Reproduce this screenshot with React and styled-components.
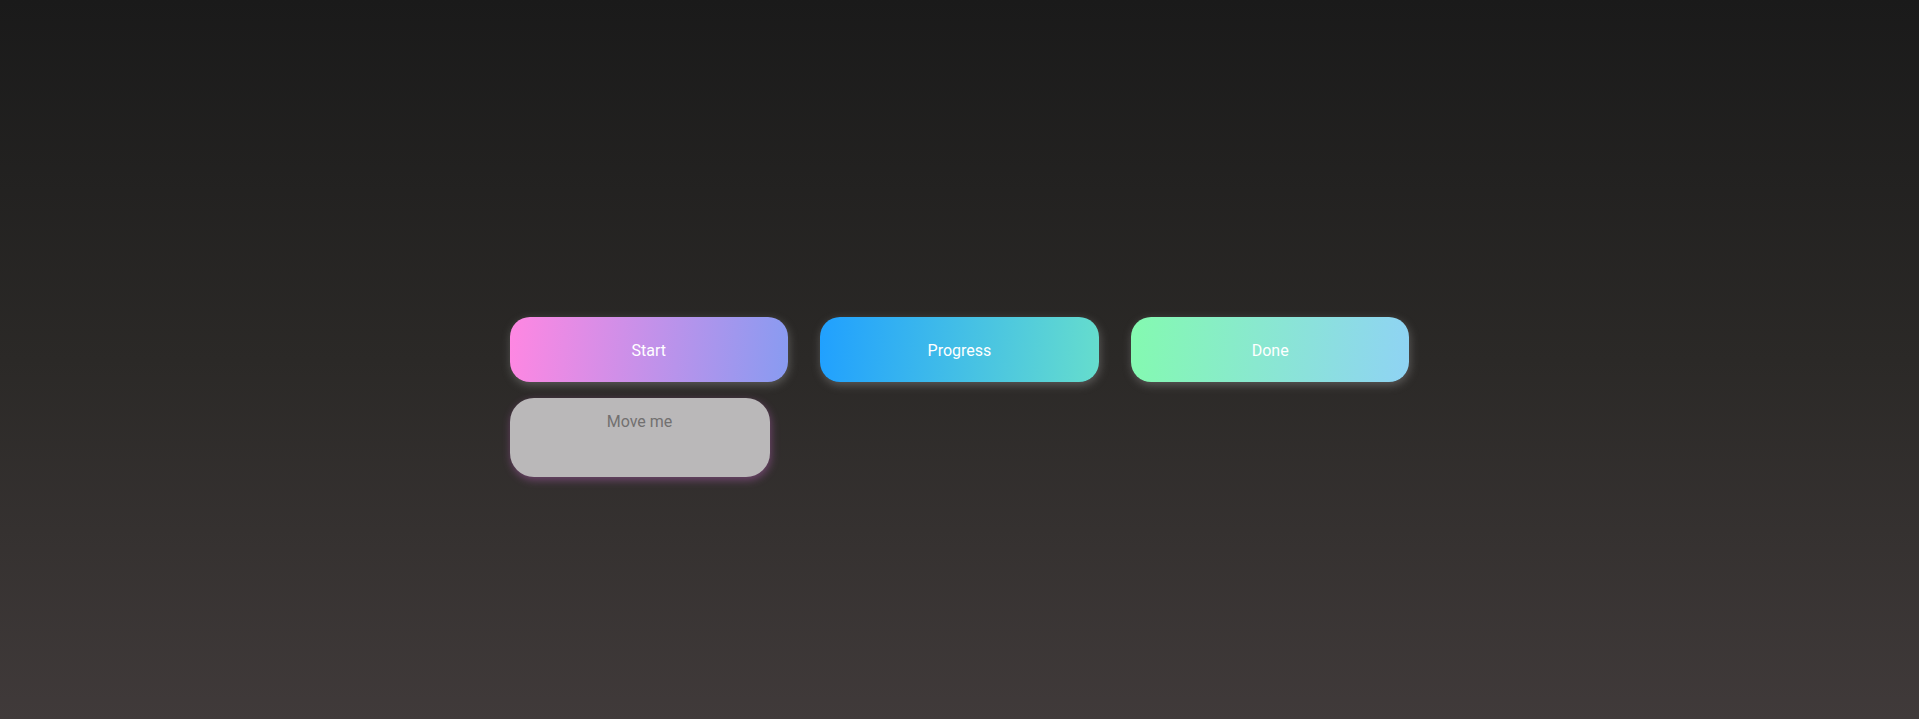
import React from "react";
import styled, { createGlobalStyle } from "styled-components";

const GlobalStyle = createGlobalStyle`
  html, body {
    margin: 0;
    padding: 0;
  }
  body {
    font-family: Roboto, "Noto Sans", sans-serif;
    background: #1a1a1a;
  }
`;

const Page = styled.div`
  min-height: 100vh;
  box-sizing: border-box;
  padding-top: 317px;
  background: linear-gradient(180deg, #1a1a1a 0%, #2b2927 50%, #403a3a 100%);
  display: flex;
  justify-content: center;
`;

const Board = styled.div`
  width: 900px;
  display: flex;
  flex-direction: column;
  gap: 16px;
`;

const Columns = styled.div`
  display: grid;
  grid-template-columns: repeat(3, 1fr);
  gap: 32px;
`;

const Column = styled.div`
  height: 65px;
  box-sizing: border-box;
  padding-top: 2px;
  border-radius: 20px;
  background: linear-gradient(95deg, ${(p) => p.from} 0%, ${(p) => p.to} 100%);
  box-shadow: 1px 3px 10px rgba(150, 150, 150, 0.45);
  display: flex;
  align-items: center;
  justify-content: center;
  color: #ffffff;
  font-size: 16px;
`;

const Card = styled.div`
  width: 260px;
  height: 79px;
  box-sizing: border-box;
  padding-top: 14px;
  border-radius: 24px;
  background: #bab8b9;
  color: #727070;
  font-size: 16px;
  text-align: center;
  box-shadow: 1px 3px 8px rgba(190, 100, 190, 0.45);
`;

const columns = [
  { title: "Start", from: "#ff87e2", to: "#889bf1" },
  { title: "Progress", from: "#20a0ff", to: "#66ddcd" },
  { title: "Done", from: "#84fab0", to: "#8fd3f4" },
];

const App = () => {
  return (
    <>
      <GlobalStyle />
      <Page>
        <Board>
          <Columns>
            {columns.map((c) => (
              <Column key={c.title} from={c.from} to={c.to}>
                {c.title}
              </Column>
            ))}
          </Columns>
          <Card>Move me</Card>
        </Board>
      </Page>
    </>
  );
};

export default App;
